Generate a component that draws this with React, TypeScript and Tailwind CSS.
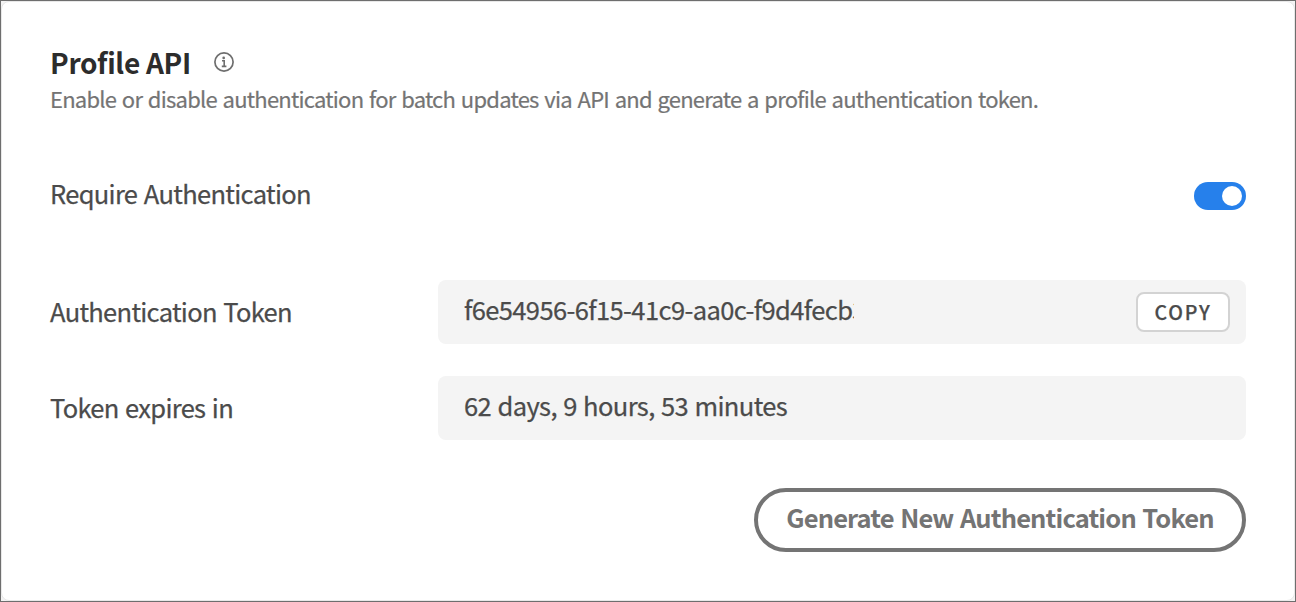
import { useState, type ReactNode } from "react";

function InfoIcon() {
  return (
    <svg width="20" height="20" viewBox="0 0 20 20" fill="none" className="ml-[23px] shrink-0" aria-hidden="true">
      <circle cx="10" cy="10" r="9.1" stroke="#6e6e6e" strokeWidth="1.7" />
      <circle cx="9.7" cy="5.9" r="1.35" fill="#6e6e6e" />
      <path d="M8 8.8h2.2v5.6M7.8 14.4h4.6" stroke="#6e6e6e" strokeWidth="1.6" />
    </svg>
  );
}

function Field({ label, children }: { label: string; children: ReactNode }) {
  return (
    <div className="flex h-16 items-center">
      <div className="w-[388px] shrink-0 pb-[3px] text-[25.5px] leading-8 tracking-[-0.7px] [-webkit-text-stroke:0.25px] [word-spacing:1.5px]">
        {label}
      </div>
      <div className="flex h-16 min-w-0 flex-1 items-center justify-between rounded-lg bg-[#f4f4f4] pr-4 pl-[26px]">
        {children}
      </div>
    </div>
  );
}

export default function App() {
  const [required, setRequired] = useState(true);
  return (
    <main className="h-[602px] w-[1296px] border border-[#6e6e6e] bg-[#f4f4f4] font-['Noto_Sans_CJK_JP',sans-serif] text-[#4b4b4b]">
      <section className="flex h-full flex-col rounded-lg border border-[#e8e8e8] bg-white px-12 pt-[44px]">
        <div className="flex h-8 items-center">
          <h1 className="text-[28px] leading-8 font-bold tracking-[-0.3px] whitespace-nowrap text-[#2c2c2c]">
            Profile API
          </h1>
          <InfoIcon />
        </div>
        <p className="mt-1 text-[22px] leading-8 tracking-[-0.765px] whitespace-nowrap text-[#747474] [-webkit-text-stroke:0.2px] [word-spacing:1.5px]">
          Enable or disable authentication for batch updates via API and generate a profile authentication token.
        </p>
        <div className="mt-[66px] flex h-8 items-center justify-between">
          <span className="pb-[6px] text-[25.5px] leading-8 tracking-[-0.68px] [-webkit-text-stroke:0.25px] [word-spacing:1.5px]">
            Require Authentication
          </span>
          <button
            role="switch"
            aria-checked={required}
            aria-label="Require Authentication"
            onClick={() => setRequired(!required)}
            className={
              required
                ? "flex h-7 w-[52px] items-center justify-end rounded-full bg-[#2680eb] px-1"
                : "flex h-7 w-[52px] items-center justify-start rounded-full bg-[#b3b3b3] px-1"
            }
          >
            <span className="size-5 rounded-full bg-white" />
          </button>
        </div>
        <div className="mt-[68px] flex flex-col gap-8">
          <Field label="Authentication Token">
            <span className="w-[390px] overflow-hidden pb-[6px] text-[25.5px] leading-8 tracking-[-0.6px] whitespace-nowrap [-webkit-text-stroke:0.25px]">
              f6e54956-6f15-41c9-aa0c-f9d4fecb3
            </span>
            <button className="h-10 w-[94px] rounded-lg border-2 border-[#d3d3d3] bg-white pb-px text-[19.5px] leading-9 font-medium tracking-[1.8px] [-webkit-text-stroke:0.25px]">
              COPY
            </button>
          </Field>
          <Field label="Token expires in">
            <span className="pb-[6px] text-[25.5px] leading-8 tracking-[-0.6px] whitespace-nowrap [-webkit-text-stroke:0.25px] [word-spacing:1.2px]">
              62 days, 9 hours, 53 minutes
            </span>
          </Field>
        </div>
        <button className="mt-12 h-16 w-[492px] self-end rounded-full border-4 border-[#747474] pb-1.5 text-[25.5px] leading-8 font-bold tracking-[-0.84px] whitespace-nowrap text-[#747474] [word-spacing:1.5px]">
          Generate New Authentication Token
        </button>
      </section>
    </main>
  );
}
